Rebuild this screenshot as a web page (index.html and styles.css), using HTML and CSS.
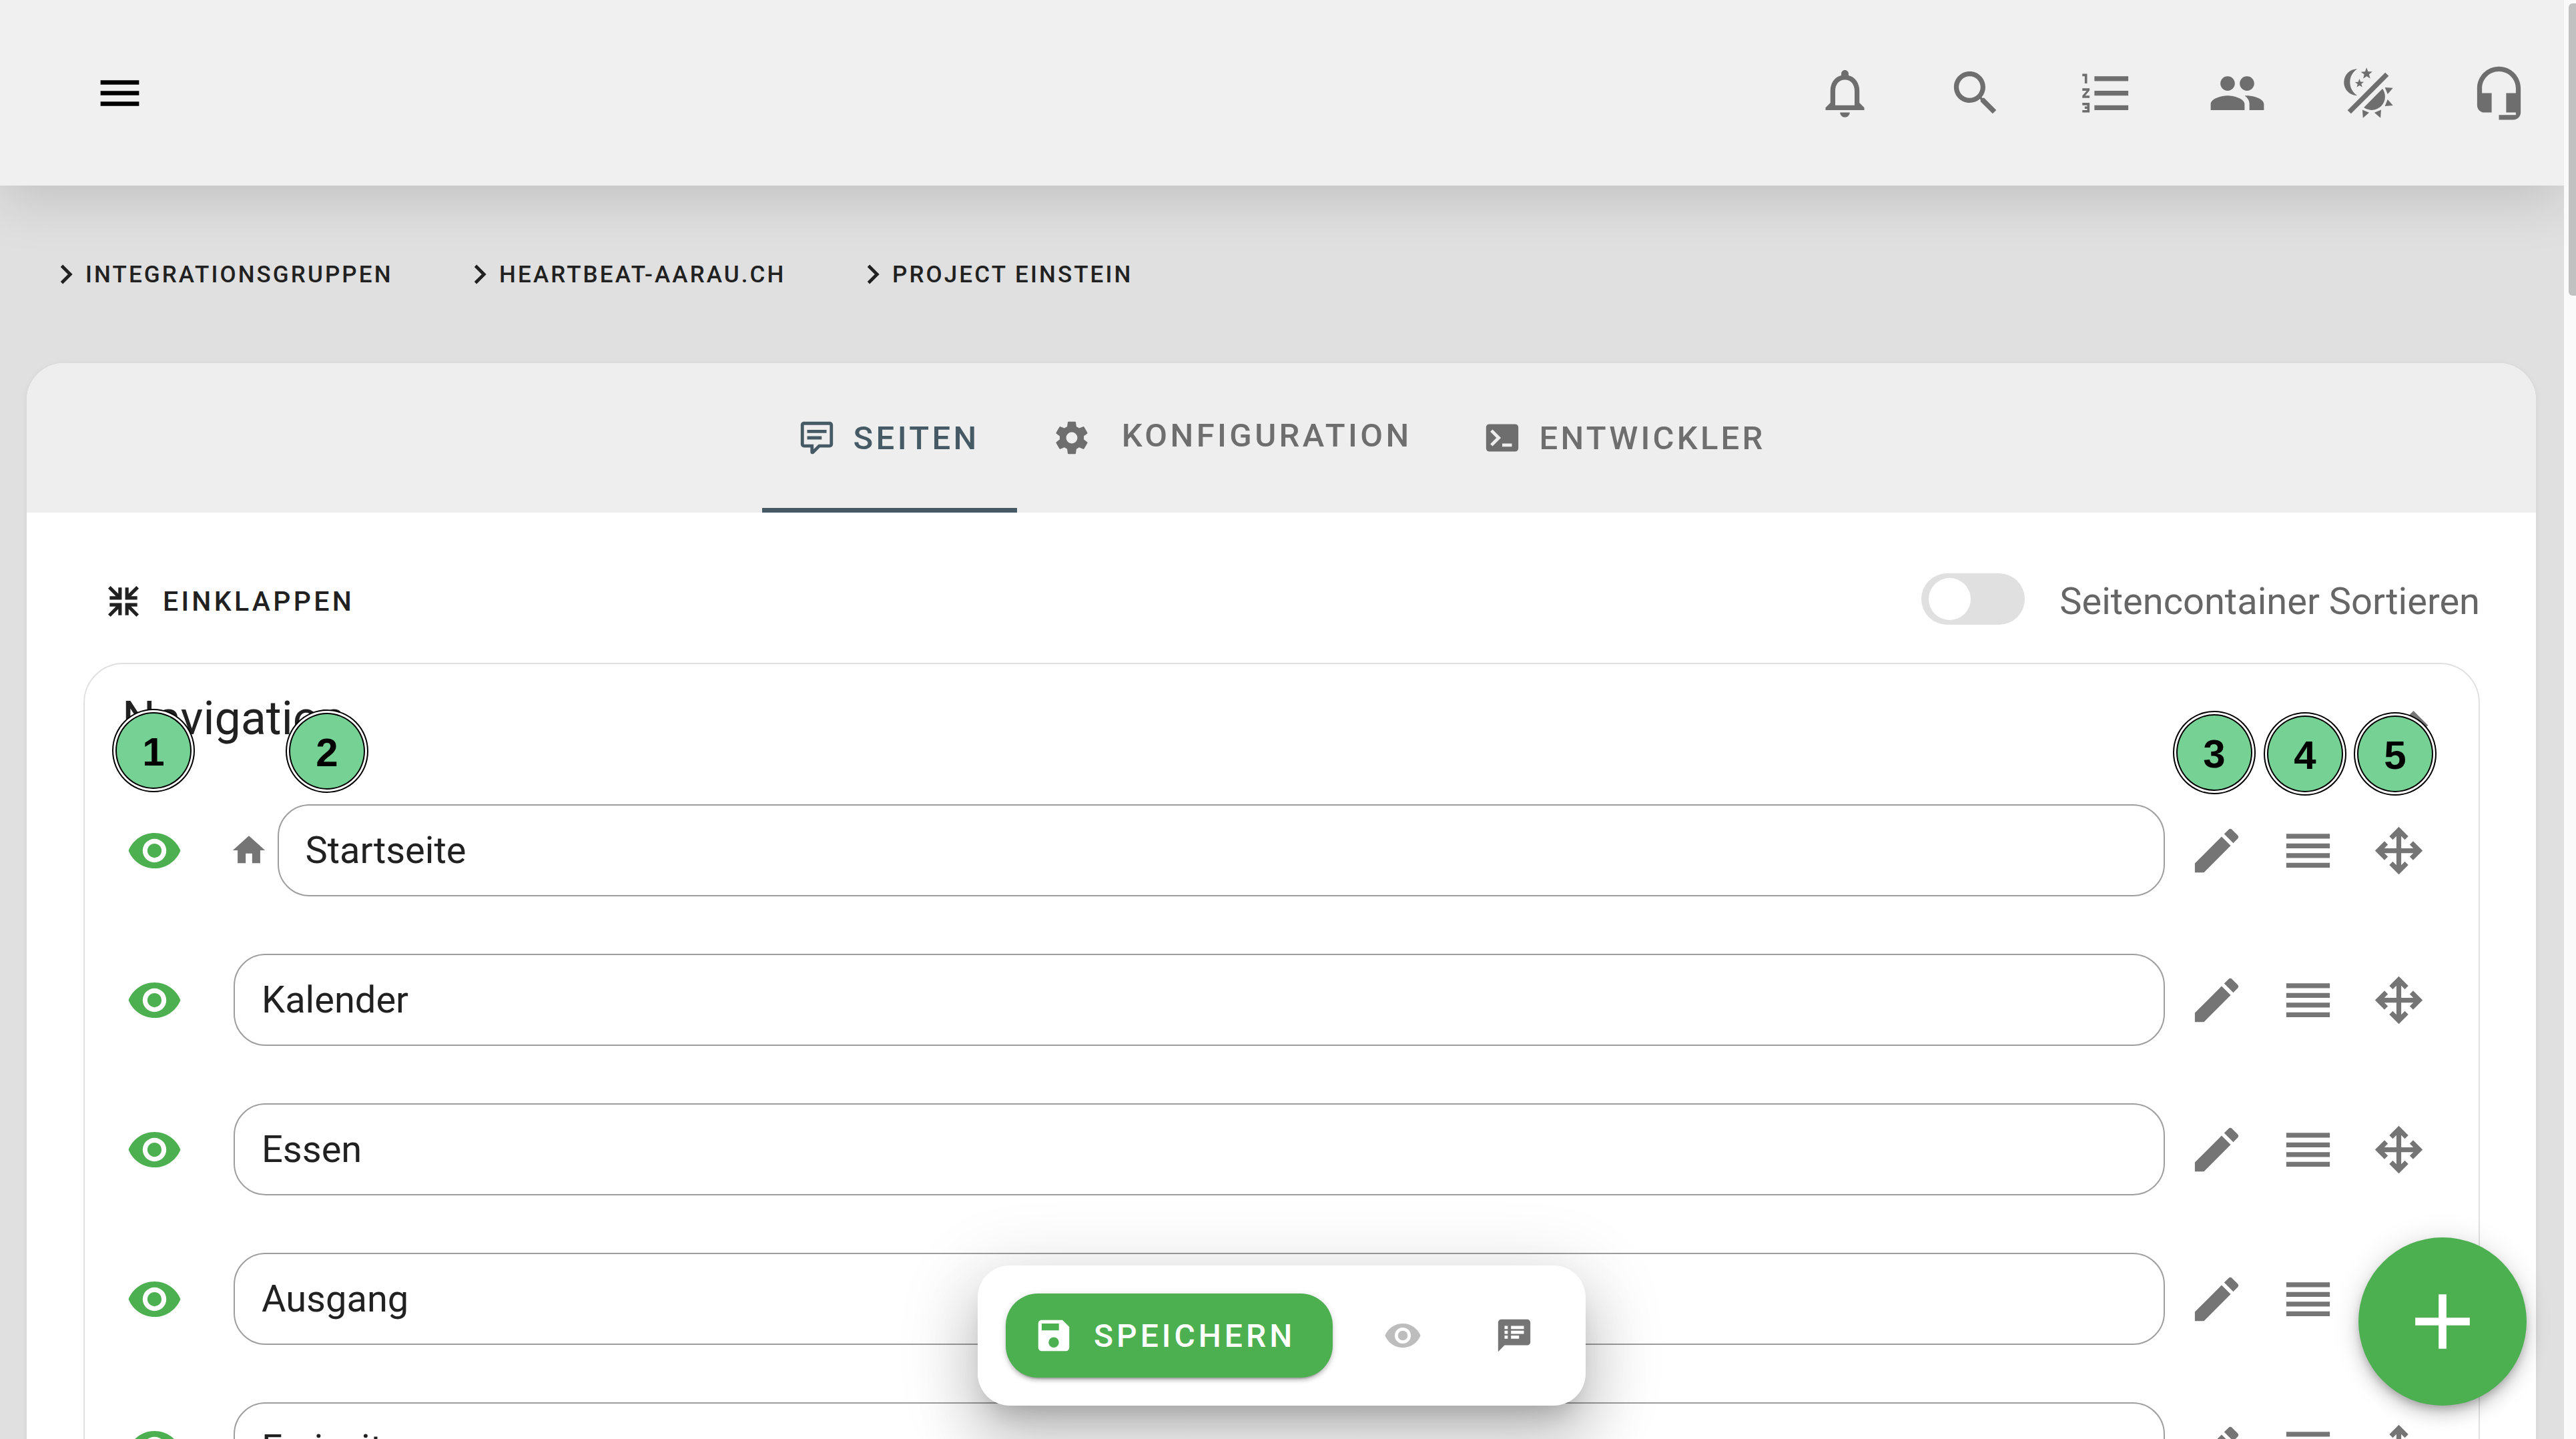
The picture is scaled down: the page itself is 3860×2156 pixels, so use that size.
FILE: index.html
```html
<!DOCTYPE html>
<html lang="de">
<head>
<meta charset="utf-8">
<title>Project Einstein</title>
<link rel="stylesheet" href="styles.css">
</head>
<body>
<div class="app">
  <header class="topbar">
    <svg class="ic ic-menu" viewBox="0 0 24 24"><path d="M3 18h18v-2H3v2zm0-5h18v-2H3v2zm0-7v2h18V6H3z"/></svg>
    <div class="top-icons">
      <svg class="ic" viewBox="0 0 24 24"><path d="M12 22c1.1 0 2-.9 2-2h-4c0 1.1.9 2 2 2zm6-6v-5c0-3.07-1.64-5.64-4.5-6.32V4c0-.83-.67-1.5-1.5-1.5s-1.5.67-1.5 1.5v.68C7.63 5.36 6 7.92 6 11v5l-2 2v1h16v-1l-2-2zm-2 1H8v-6c0-2.48 1.51-4.5 4-4.5s4 2.02 4 4.5v6z"/></svg>
      <svg class="ic" viewBox="0 0 24 24"><path d="M15.5 14h-.79l-.28-.27C15.41 12.59 16 11.11 16 9.5 16 5.91 13.09 3 9.5 3S3 5.91 3 9.5 5.91 16 9.5 16c1.61 0 3.09-.59 4.23-1.57l.27.28v.79l5 4.99L20.49 19l-4.99-5zm-6 0C7.01 14 5 11.99 5 9.5S7.01 5 9.5 5 14 7.01 14 9.5 11.99 14 9.5 14z"/></svg>
      <svg class="ic" viewBox="0 0 24 24"><path d="M2 17h2v.5H3v1h1v.5H2v1h3v-4H2v1zm1-9h1V4H2v1h1v3zm-1 3h1.8L2 13.1v.9h3v-1H3.2L5 10.9V10H2v1zm5-6v2h14V5H7zm0 14h14v-2H7v2zm0-6h14v-2H7v2z"/></svg>
      <svg class="ic" viewBox="0 0 24 24"><path d="M16 11c1.66 0 2.99-1.34 2.99-3S17.66 5 16 5c-1.66 0-3 1.34-3 3s1.34 3 3 3zm-8 0c1.66 0 2.99-1.34 2.99-3S9.66 5 8 5C6.34 5 5 6.34 5 8s1.34 3 3 3zm0 2c-2.33 0-7 1.17-7 3.5V19h14v-2.5c0-2.33-4.67-3.5-7-3.5zm8 0c-.29 0-.62.02-.97.05 1.16.84 1.97 1.97 1.97 3.45V19h6v-2.5c0-2.33-4.67-3.5-7-3.5z"/></svg>
      <svg class="ic" viewBox="0 0 24 24"><path d="M7.5,2C5.71,3.15 4.5,5.18 4.5,7.5C4.5,9.82 5.71,11.85 7.53,13C4.46,13 2,10.54 2,7.5A5.5,5.5 0 0,1 7.5,2M19.07,3.5L20.5,4.93L4.93,20.5L3.5,19.07L19.07,3.5M12.89,5.93L11.41,5L9.97,6L10.39,4.3L9,3.24L10.75,3.12L11.33,1.47L12,3.1L13.73,3.13L12.38,4.26L12.89,5.93M9.59,9.54L8.43,8.81L7.31,9.59L7.65,8.27L6.56,7.44L7.92,7.35L8.37,6.06L8.88,7.33L10.24,7.36L9.19,8.23L9.59,9.54M19,13.5A5.5,5.5 0 0,1 13.5,19C12.28,19 11.15,18.6 10.24,17.93L17.93,10.24C18.6,11.15 19,12.28 19,13.5M14.6,20.08L17.37,18.93L17.13,22.28L14.6,20.08M18.93,17.38L20.08,14.61L22.28,17.12L18.93,17.38M20.08,12.42L18.94,9.64L22.28,9.88L20.08,12.42M9.63,18.93L12.4,20.08L9.87,22.28L9.63,18.93Z"/></svg>
      <svg class="ic" viewBox="0 0 24 24"><path d="M12 1c-4.97 0-9 4.03-9 9v7c0 1.66 1.34 3 3 3h3v-8H5v-2c0-3.87 3.13-7 7-7s7 3.13 7 7v2h-4v8h4v1h-7v2h6c1.66 0 3-1.34 3-3V10c0-4.97-4.03-9-9-9z"/></svg>
    </div>
  </header>

  <nav class="crumbs">
    <a class="crumb"><svg class="ic-crumb" viewBox="0 0 24 24"><path d="M8.59,16.58L13.17,12L8.59,7.41L10,6L16,12L10,18L8.59,16.58Z"/></svg>INTEGRATIONSGRUPPEN</a>
    <a class="crumb"><svg class="ic-crumb" viewBox="0 0 24 24"><path d="M8.59,16.58L13.17,12L8.59,7.41L10,6L16,12L10,18L8.59,16.58Z"/></svg>HEARTBEAT-AARAU.CH</a>
    <a class="crumb"><svg class="ic-crumb" viewBox="0 0 24 24"><path d="M8.59,16.58L13.17,12L8.59,7.41L10,6L16,12L10,18L8.59,16.58Z"/></svg>PROJECT EINSTEIN</a>
  </nav>

  <main class="card">
    <div class="tabs">
      <div class="tab tab-active">
        <svg class="ic-tab" viewBox="0 0 24 24"><path d="M9,22A1,1 0 0,1 8,21V18H4A2,2 0 0,1 2,16V4C2,2.89 2.9,2 4,2H20A2,2 0 0,1 22,4V16A2,2 0 0,1 20,18H13.9L10.2,21.71C10,21.9 9.75,22 9.5,22V22H9M10,16V19.08L13.08,16H20V4H4V16H10M6,7H18V9H6V7M6,11H15V13H6V11Z"/></svg>
        <span>SEITEN</span>
      </div>
      <div class="tab tab-config">
        <svg class="ic-tab" viewBox="0 0 24 24"><path d="M12,15.5A3.5,3.5 0 0,1 8.5,12A3.5,3.5 0 0,1 12,8.5A3.5,3.5 0 0,1 15.5,12A3.5,3.5 0 0,1 12,15.5M19.43,12.97C19.47,12.65 19.5,12.33 19.5,12C19.5,11.67 19.47,11.34 19.43,11L21.54,9.37C21.73,9.22 21.78,8.95 21.66,8.73L19.66,5.27C19.54,5.05 19.27,4.96 19.05,5.05L16.56,6.05C16.04,5.66 15.5,5.32 14.87,5.07L14.5,2.42C14.46,2.18 14.25,2 14,2H10C9.75,2 9.54,2.18 9.5,2.42L9.13,5.07C8.5,5.32 7.96,5.66 7.44,6.05L4.95,5.05C4.73,4.96 4.46,5.05 4.34,5.27L2.34,8.73C2.21,8.95 2.27,9.22 2.46,9.37L4.57,11C4.53,11.34 4.5,11.67 4.5,12C4.5,12.33 4.53,12.65 4.57,12.97L2.46,14.63C2.27,14.78 2.21,15.05 2.34,15.27L4.34,18.73C4.46,18.95 4.73,19.03 4.95,18.95L7.44,17.94C7.96,18.34 8.5,18.68 9.13,18.93L9.5,21.58C9.54,21.82 9.75,22 10,22H14C14.25,22 14.46,21.82 14.5,21.58L14.87,18.93C15.5,18.67 16.04,18.34 16.56,17.94L19.05,18.95C19.27,19.03 19.54,18.95 19.66,18.73L21.66,15.27C21.78,15.05 21.73,14.78 21.54,14.63L19.43,12.97Z"/></svg>
        <span>KONFIGURATION</span>
      </div>
      <div class="tab tab-dev">
        <svg class="ic-tab" viewBox="0 0 24 24"><path fill-rule="evenodd" d="M4 3.5h16a2 2 0 0 1 2 2v13a2 2 0 0 1-2 2H4a2 2 0 0 1-2-2v-13a2 2 0 0 1 2-2zM4.6 8.2L8.4 12l-3.8 3.8 1.4 1.4L11.2 12 6 6.8zM12 15.5v2h6v-2z"/></svg>
        <span>ENTWICKLER</span>
      </div>
    </div>

    <div class="body">
      <div class="toolbar">
        <div class="collapse">
          <svg class="ic-collapse" viewBox="0 0 24 24"><path d="M19.5,3.09L20.91,4.5L16.41,9H20V11H13V4H15V7.59L19.5,3.09M20,13V15H16.41L20.91,19.5L19.5,20.91L15,16.41V20H13V13H20M4.5,3.09L9,7.59V4H11V11H4V9H7.59L3.09,4.5L4.5,3.09M3.09,19.5L7.59,15H4V13H11V20H9V16.41L4.5,20.91L3.09,19.5Z"/></svg>
          <span>EINKLAPPEN</span>
        </div>
        <div class="sort">
          <div class="switch"><div class="thumb"></div></div>
          <span class="sort-label">Seitencontainer Sortieren</span>
        </div>
      </div>

      <section class="nav-card">
        <div class="nav-head">
          <h2 class="nav-title">Navigation</h2>
          <svg class="ic-row" viewBox="0 0 24 24"><path d="M7.41,15.41L12,10.83L16.59,15.41L18,14L12,8L6,14L7.41,15.41Z"/></svg>
        </div>

        <div class="row">
          <svg class="ic-eye" viewBox="0 0 24 24"><use href="#eye"/></svg>
          <svg class="ic-home" viewBox="0 0 24 24"><path d="M10,20V14H14V20H19V12H22L12,3L2,12H5V20H10Z"/></svg>
          <div class="field">Startseite</div>
          <svg class="ic-row act-first" viewBox="0 0 24 24"><use href="#pencil"/></svg>
          <svg class="ic-row" viewBox="0 0 24 24"><use href="#lines"/></svg>
          <svg class="ic-row" viewBox="0 0 24 24"><use href="#move"/></svg>
        </div>
        <div class="row">
          <svg class="ic-eye" viewBox="0 0 24 24"><use href="#eye"/></svg>
          <div class="field">Kalender</div>
          <svg class="ic-row act-first" viewBox="0 0 24 24"><use href="#pencil"/></svg>
          <svg class="ic-row" viewBox="0 0 24 24"><use href="#lines"/></svg>
          <svg class="ic-row" viewBox="0 0 24 24"><use href="#move"/></svg>
        </div>
        <div class="row">
          <svg class="ic-eye" viewBox="0 0 24 24"><use href="#eye"/></svg>
          <div class="field">Essen</div>
          <svg class="ic-row act-first" viewBox="0 0 24 24"><use href="#pencil"/></svg>
          <svg class="ic-row" viewBox="0 0 24 24"><use href="#lines"/></svg>
          <svg class="ic-row" viewBox="0 0 24 24"><use href="#move"/></svg>
        </div>
        <div class="row">
          <svg class="ic-eye" viewBox="0 0 24 24"><use href="#eye"/></svg>
          <div class="field">Ausgang</div>
          <svg class="ic-row act-first" viewBox="0 0 24 24"><use href="#pencil"/></svg>
          <svg class="ic-row" viewBox="0 0 24 24"><use href="#lines"/></svg>
          <svg class="ic-row" viewBox="0 0 24 24"><use href="#move"/></svg>
        </div>
        <div class="row">
          <svg class="ic-eye" viewBox="0 0 24 24"><use href="#eye"/></svg>
          <div class="field">Freizeit</div>
          <svg class="ic-row act-first" viewBox="0 0 24 24"><use href="#pencil"/></svg>
          <svg class="ic-row" viewBox="0 0 24 24"><use href="#lines"/></svg>
          <svg class="ic-row" viewBox="0 0 24 24"><use href="#move"/></svg>
        </div>
      </section>
    </div>
  </main>
</div>

<aside class="scrollbar"><div class="scroll-thumb"></div></aside>

<div class="save-bar">
  <button class="save-btn">
    <svg class="ic-save" viewBox="0 0 24 24"><path d="M15,9H5V5H15M12,19A3,3 0 0,1 9,16A3,3 0 0,1 12,13A3,3 0 0,1 15,16A3,3 0 0,1 12,19M17,3H5C3.89,3 3,3.9 3,5V19A2,2 0 0,0 5,21H19A2,2 0 0,0 21,19V7L17,3Z"/></svg>
    <span>SPEICHERN</span>
  </button>
  <svg class="ic-bar ic-bar-eye" viewBox="0 0 24 24"><use href="#eye"/></svg>
  <svg class="ic-bar ic-bar-notes" viewBox="0 0 24 24"><path d="M20 2H4c-1.1 0-1.99.9-1.99 2L2 22l4-4h14c1.1 0 2-.9 2-2V4c0-1.1-.9-2-2-2zM8 14H6v-2h2v2zm0-3H6V9h2v2zm0-3H6V6h2v2zm7 6h-5v-2h5v2zm3-3h-8V9h8v2zm0-3h-8V6h8v2z"/></svg>
</div>

<button class="fab"><svg class="ic-plus" viewBox="0 0 24 24"><path d="M19,13H13V19H11V13H5V11H11V5H13V11H19V13Z"/></svg></button>

<div class="mark mark-1">1</div>
<div class="mark mark-2">2</div>
<div class="mark mark-3">3</div>
<div class="mark mark-4">4</div>
<div class="mark mark-5">5</div>

<svg class="defs" aria-hidden="true">
  <defs>
    <path id="eye" d="M12,9A3,3 0 0,0 9,12A3,3 0 0,0 12,15A3,3 0 0,0 15,12A3,3 0 0,0 12,9M12,17A5,5 0 0,1 7,12A5,5 0 0,1 12,7A5,5 0 0,1 17,12A5,5 0 0,1 12,17M12,4.5C7,4.5 2.73,7.61 1,12C2.73,16.39 7,19.5 12,19.5C17,19.5 21.27,16.39 23,12C21.27,7.61 17,4.5 12,4.5Z"/>
    <path id="pencil" d="M20.71,7.04C21.1,6.65 21.1,6 20.71,5.63L18.37,3.29C18,2.9 17.35,2.9 16.96,3.29L15.12,5.12L18.87,8.87M3,17.25V21H6.75L17.81,9.93L14.06,6.18L3,17.25Z"/>
    <path id="lines" d="M3,15H21V13H3V15M3,19H21V17H3V19M3,11H21V9H3V11M3,5V7H21V5H3Z"/>
    <path id="move" d="M13,11H18L16.5,9.5L17.92,8.08L21.84,12L17.92,15.92L16.5,14.5L18,13H13V18L14.5,16.5L15.92,17.92L12,21.84L8.08,17.92L9.5,16.5L11,18V13H6L7.5,14.5L6.08,15.92L2.16,12L6.08,8.08L7.5,9.5L6,11H11V6L9.5,7.5L8.08,6.08L12,2.16L15.92,6.08L14.5,7.5L13,6V11Z"/>
  </defs>
</svg>
</body>
</html>
```
FILE: styles.css
```css
* { box-sizing: border-box; }
html, body { margin: 0; padding: 0; }
body {
  width: 3860px;
  height: 2156px;
  display: flex;
  overflow: hidden;
  background: #e0e0e0;
  font-family: Roboto, "Liberation Sans", sans-serif;
  position: relative;
}
.defs { position: absolute; width: 0; height: 0; }
.app { width: 3842px; height: 2156px; overflow: hidden; flex: none; }
.scrollbar { flex: 1; background: #fafafa; padding: 5px 0 0 7px; }
.scroll-thumb { height: 438px; background: #c1c1c1; border-radius: 6px 0 0 6px; }

.topbar {
  height: 278px;
  background: #f0f0f0;
  display: flex;
  align-items: center;
  justify-content: space-between;
  padding: 0 54px 0 141px;
  box-shadow: 0 18px 80px rgba(0,0,0,.15);
  position: relative;
}
.ic { width: 87px; height: 87px; fill: #6e6e6e; display: block; }
.ic-menu { width: 77px; height: 77px; fill: #000; }
.top-icons { display: flex; gap: 109px; }

.crumbs {
  height: 266px;
  display: flex;
  align-items: center;
  padding-left: 70px;
  gap: 101.5px;
  font-size: 35px;
  font-weight: 500;
  letter-spacing: 3.1px;
  color: #212121;
}
.crumb { display: flex; align-items: center; }
.ic-crumb { width: 58px; height: 58px; fill: #212121; }

.card {
  margin: 0 42px 0 40px;
  border-radius: 56px 56px 0 0;
  background: #fff;
  box-shadow: 0 2px 12px rgba(0,0,0,.06);
  height: 1700px;
  overflow: hidden;
}
.tabs {
  height: 224px;
  background: #eeeeee;
  display: flex;
  justify-content: center;
}
.tab {
  display: flex;
  align-items: center;
  padding: 0 53px;
  gap: 29px;
  font-size: 49px;
  font-weight: 500;
  letter-spacing: 4.4px;
  color: #6e6e6e;
  white-space: nowrap;
}
.ic-tab { width: 58px; height: 58px; fill: #6e6e6e; flex: none; }
.tab-active { color: #455a64; gap: 26px; padding-right: 56px; box-shadow: inset 0 -7px 0 #455a64; }
.tab-active .ic-tab { fill: #455a64; }
.tab-config { gap: 46px; }
.tab-config span { margin-bottom: 8px; }
.tab-dev { gap: 27px; letter-spacing: 4.2px; }

.body { padding: 83px 84px 0 85px; }
.toolbar {
  height: 100px;
  margin-bottom: 42px;
  display: flex;
  align-items: center;
  justify-content: space-between;
  padding-left: 29px;
}
.collapse {
  display: flex;
  align-items: center;
  gap: 28px;
  font-size: 41px;
  font-weight: 500;
  letter-spacing: 4.3px;
  color: #212121;
}
.ic-collapse { width: 62px; height: 62px; fill: #212121; }
.sort { display: flex; align-items: center; gap: 52px; }
.switch {
  width: 155px;
  height: 77px;
  margin-bottom: 7px;
  border-radius: 39px;
  background: #e0e0e0;
  padding: 7px 11px;
}
.thumb { width: 63px; height: 63px; border-radius: 50%; background: #fff; }
.sort-label { font-size: 56px; color: #666; }

.nav-card {
  border: 2px solid #e0e0e0;
  border-radius: 60px;
  padding: 41px 0 400px 60px;
}
.nav-head {
  display: flex;
  justify-content: space-between;
  padding-right: 54px;
  height: 80px;
  margin-bottom: 89px;
}
.nav-title {
  margin: 0 0 0 -4px;
  font-size: 70px;
  line-height: 80px;
  font-weight: 400;
  color: #212121;
}
.row {
  display: flex;
  align-items: center;
  height: 138px;
  margin-bottom: 86px;
  padding-right: 76px;
  gap: 49.5px;
}
.ic-eye { width: 85px; height: 85px; fill: #4caf50; flex: none; margin: 0 26.5px 0 2px; }
.ic-home { width: 58px; height: 58px; fill: #757575; flex: none; margin: 0 -35.5px 0 -6.5px; }
.field {
  flex: 1;
  height: 138px;
  border: 2.5px solid #9e9e9e;
  border-radius: 48px;
  padding-left: 40px;
  display: flex;
  align-items: center;
  font-size: 56px;
  color: #212121;
}
.ic-row { width: 87px; height: 87px; fill: #757575; flex: none; }
.act-first { margin-left: -15.5px; }

.save-bar {
  position: absolute;
  left: 1465px;
  top: 1896px;
  width: 911px;
  height: 210px;
  background: #fff;
  border-radius: 48px;
  display: flex;
  align-items: center;
  padding-left: 42px;
  box-shadow: 0 26px 36px -17px rgba(0,0,0,.2), 0 58px 91px 7px rgba(0,0,0,.14), 0 22px 111px 19px rgba(0,0,0,.12);
}
.save-btn {
  width: 490px;
  height: 126px;
  border: 0;
  border-radius: 48px;
  background: #4caf50;
  color: #fff;
  display: flex;
  align-items: center;
  padding: 0 0 0 41px;
  gap: 29px;
  font: 500 48px Roboto, sans-serif;
  letter-spacing: 5px;
  box-shadow: 0 7px 2px -5px rgba(0,0,0,.2), 0 5px 5px rgba(0,0,0,.14), 0 2px 12px rgba(0,0,0,.12);
}
.ic-save { width: 62px; height: 62px; fill: #fff; flex: none; }
.ic-bar { width: 58px; height: 58px; flex: none; }
.ic-bar-eye { fill: #bdbdbd; margin-left: 76px; }
.ic-bar-notes { fill: #757575; margin-left: 109px; }

.fab {
  position: absolute;
  left: 3534px;
  top: 1854px;
  width: 252px;
  height: 252px;
  border: 0;
  border-radius: 50%;
  padding: 0;
  background: #4caf50;
  display: flex;
  align-items: center;
  justify-content: center;
  box-shadow: 0 7px 12px -2px rgba(0,0,0,.2), 0 14px 24px rgba(0,0,0,.14), 0 2px 43px rgba(0,0,0,.12);
}
.ic-plus { width: 140px; height: 140px; fill: #fff; }

.mark {
  position: absolute;
  width: 114px;
  height: 115px;
  border-radius: 50%;
  background: #76d195;
  border: 2px solid #000;
  box-shadow: 0 0 0 3px #fff, 0 0 0 5px #000;
  display: flex;
  align-items: center;
  justify-content: center;
  padding-top: 3px;
  font: 700 60px "Liberation Sans", sans-serif;
  color: #000;
}
.mark-1 { left: 173px; top: 1067px; }
.mark-2 { left: 433px; top: 1068px; }
.mark-3 { left: 3261px; top: 1070px; }
.mark-4 { left: 3397px; top: 1072px; }
.mark-5 { left: 3532px; top: 1072px; }
```
